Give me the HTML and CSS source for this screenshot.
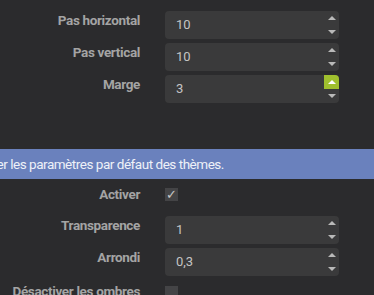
FILE: index.html
```html
<!DOCTYPE html>
<html lang="fr">
<head>
    <meta charset="UTF-8">
    <title>Paramètres du thème</title>
    <link rel="stylesheet" href="styles.css">
</head>
<body>
<div class="settings top">
    <div class="label">Pas horizontal</div>
    <div class="spin"><span class="val">10</span><div class="btns"><span class="up"></span><span class="down"></span></div></div>

    <div class="label">Pas vertical</div>
    <div class="spin"><span class="val">10</span><div class="btns"><span class="up"></span><span class="down"></span></div></div>

    <div class="label">Marge</div>
    <div class="spin"><span class="val">3</span><div class="btns"><span class="up hover"></span><span class="down"></span></div></div>
</div>

<div class="banner"><span class="bannerText">Ignorer les paramètres par défaut des thèmes.</span></div>

<div class="settings bottom">
    <div class="label check">Activer</div>
    <div class="checkRow"><span class="box">&#10003;</span></div>

    <div class="label">Transparence</div>
    <div class="spin"><span class="val">1</span><div class="btns"><span class="up"></span><span class="down"></span></div></div>

    <div class="label">Arrondi</div>
    <div class="spin"><span class="val">0,3</span><div class="btns"><span class="up"></span><span class="down"></span></div></div>

    <div class="label check late">Désactiver les ombres</div>
    <div class="checkRow late"><span class="box"></span></div>
</div>
</body>
</html>
```

FILE: styles.css
```css
html,body{margin:0;padding:0;background:#2b2b2d;overflow:hidden;}
body{font-family:Roboto,"Liberation Sans",sans-serif;width:374px;height:295px;}

.settings{display:grid;grid-template-columns:140px 174px;column-gap:25px;row-gap:4px;}
.settings.top{padding-top:11px;}
.settings.bottom{padding-top:3px;}

.label{font-size:13.5px;font-weight:bold;letter-spacing:-0.35px;color:#a4a4a4;text-align:right;line-height:17px;padding-top:1px;white-space:nowrap;}
.label.check{margin-top:4px;padding-top:0;}
.label.late{margin-top:3px;}

.spin{height:28px;background:#3a3a3b;border-radius:4px;display:flex;justify-content:space-between;overflow:hidden;}
.val{font-size:13px;line-height:28px;color:#c4c4c4;padding-left:11px;}
.btns{width:15px;display:flex;flex-direction:column;}
.btns span{flex:1;display:flex;align-items:center;justify-content:center;}
.btns span:before{content:"";width:0;height:0;border-left:4px solid transparent;border-right:4px solid transparent;}
.up:before{border-bottom:4px solid #b9b9b9;}
.down:before{border-top:4px solid #b9b9b9;}
.up.hover{background:#9fbf2e;}
.up.hover:before{border-bottom-color:#ffffff;}

.checkRow{height:24px;margin-top:6px;}
.box{display:block;width:13px;height:13px;background:#444446;color:#c8c8c8;font-size:13px;line-height:14px;text-align:center;font-family:"DejaVu Sans",sans-serif;}

.banner{margin-top:46px;height:30px;background:#6a81bd;overflow:hidden;white-space:nowrap;}
.bannerText{display:block;font-size:13.5px;letter-spacing:-0.47px;line-height:30px;color:#eef1f8;margin-left:-32px;}
```
